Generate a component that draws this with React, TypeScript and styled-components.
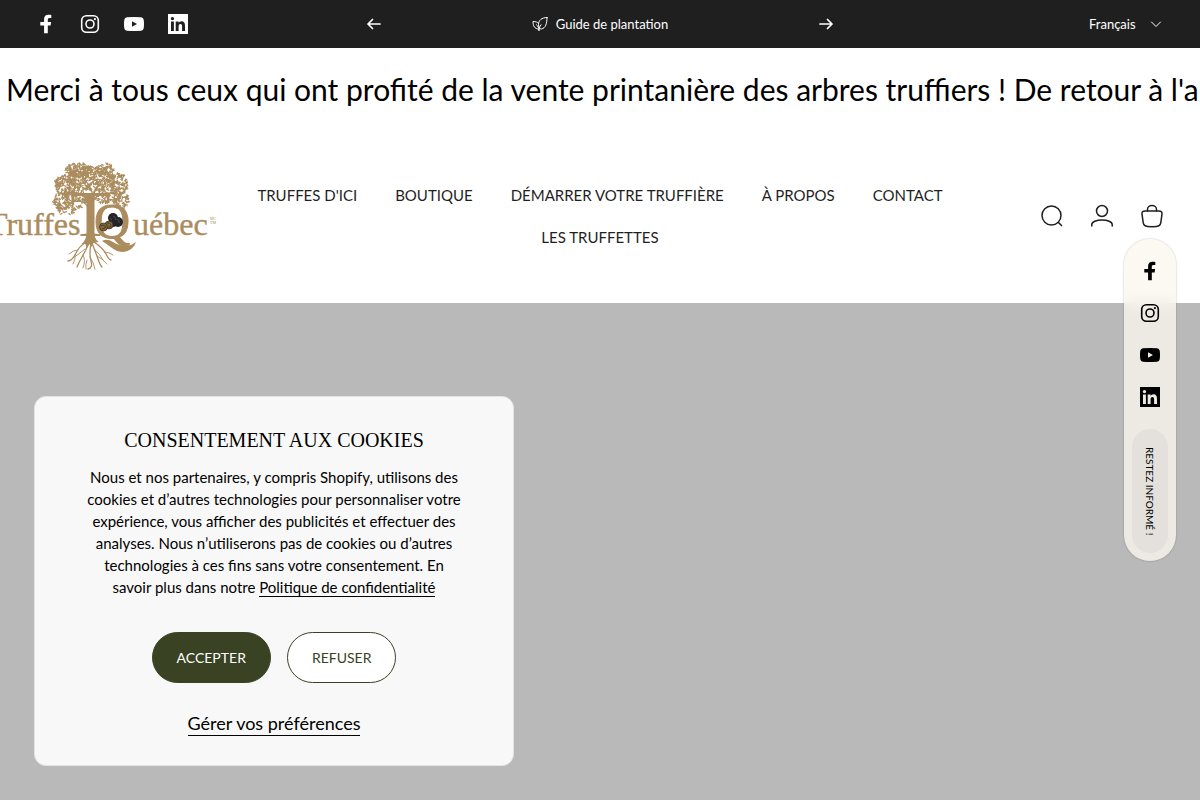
import React from 'react';
import styled, { createGlobalStyle } from 'styled-components';

const GlobalStyle = createGlobalStyle`
  *, *::before, *::after { box-sizing: border-box; }
  body {
    margin: 0;
    background: #fff;
    color: #000;
    font-family: Lato, 'Liberation Sans', sans-serif;
    font-size: 15px;
    line-height: 22px;
    overflow-x: hidden;
  }
  a { color: inherit; text-decoration: none; }
  button { font: inherit; cursor: pointer; }
  svg { display: block; }
`;

const Page = styled.div`
  display: flex;
  flex-direction: column;
  min-height: 100vh;
`;

const TopBar = styled.div`
  display: grid;
  grid-template-columns: 1fr 468px 1fr;
  align-items: center;
  height: 48px;
  padding: 0 36px;
  background: #1f1f1f;
  color: #fff;
  font-size: 13px;
`;

const SocialList = styled.ul<{ $vertical?: boolean }>`
  display: flex;
  flex-direction: ${(p) => (p.$vertical ? 'column' : 'row')};
  gap: ${(p) => (p.$vertical ? 22 : 24)}px;
  margin: 0;
  padding: 0;
  list-style: none;
`;

const Announcement = styled.div`
  display: flex;
  align-items: center;
  justify-content: space-between;
`;

const AnnouncementLink = styled.a`
  display: flex;
  align-items: center;
  gap: 8px;
`;

const IconButton = styled.button`
  display: flex;
  padding: 0;
  border: 0;
  background: none;
  color: inherit;
`;

const Language = styled.label`
  display: flex;
  align-items: center;
  justify-self: end;
  gap: 12px;
`;

const LanguageSelect = styled.select`
  appearance: none;
  padding: 0;
  border: 0;
  background: none;
  color: inherit;
  font: inherit;
  line-height: 20px;
`;

const Marquee = styled.div`
  padding: 20px 0 20px 6px;
  overflow: hidden;
  font-size: 30px;
  line-height: 42px;
  white-space: nowrap;
`;

const Header = styled.header`
  display: grid;
  grid-template-columns: minmax(0, 1fr) minmax(0, 686px) minmax(0, 1fr);
  align-items: center;
  gap: 40px;
  padding: 30px 36px 31px;
`;

const LogoLink = styled.a`
  display: flex;
  justify-content: flex-end;
  color: #ab8c5e;
`;

const LogoArt = styled.svg`
  flex: none;
  width: 228px;
  height: 112px;
  font-family: 'Liberation Serif', serif;
`;

const Nav = styled.nav`
  display: flex;
  flex-wrap: wrap;
  justify-content: center;
  gap: 20px 38px;
  color: #1f1f1f;
`;

const Actions = styled.div`
  display: flex;
  justify-content: flex-end;
  gap: 26px;
  color: #1f1f1f;
`;

const Hero = styled.main`
  flex: 1;
  background: #b9b9b9;
`;

const FloatingBar = styled.aside`
  position: fixed;
  top: 50%;
  right: 24px;
  transform: translateY(-50%);
  display: flex;
  flex-direction: column;
  align-items: center;
  gap: 22px;
  width: 52px;
  padding: 22px 8px 8px;
  border-radius: 26px;
  background: rgba(251, 247, 238, 0.78);
  backdrop-filter: blur(8px);
  box-shadow: 0 0 2px rgba(0, 0, 0, 0.3);
`;

const InformButton = styled.button`
  width: 36px;
  height: 124px;
  padding: 0;
  border: 0;
  border-radius: 18px;
  background: #e4e0dc;
  color: #000;
  font-size: 10px;
  line-height: 12px;
  text-transform: uppercase;
  writing-mode: vertical-rl;
`;

const Consent = styled.section`
  position: fixed;
  left: 34px;
  bottom: 34px;
  display: flex;
  flex-direction: column;
  align-items: center;
  width: 480px;
  max-width: calc(100vw - 68px);
  padding: 29px 48px;
  border: 1px solid #e4e4e4;
  border-radius: 12px;
  background: #f8f8f8;
  text-align: center;
`;

const ConsentTitle = styled.h2`
  margin: 0 0 12px;
  font-family: 'Liberation Serif', serif;
  font-size: 20px;
  font-weight: 400;
  line-height: 28px;
  text-transform: uppercase;
`;

const ConsentText = styled.p`
  margin: 0 0 34px;
`;

const PolicyLink = styled.a`
  border-bottom: 1px solid #000;
`;

const ConsentButtons = styled.div`
  display: flex;
  gap: 16px;
  margin-bottom: 28px;
`;

const PillButton = styled.button<{ $filled?: boolean }>`
  height: 51px;
  padding: 0 24px;
  border: 1px solid #394223;
  border-radius: 26px;
  background: ${(p) => (p.$filled ? '#394223' : '#fff')};
  color: ${(p) => (p.$filled ? '#fff' : '#394223')};
  font-size: 14px;
  text-transform: uppercase;
`;

const PreferencesButton = styled.button`
  padding: 0;
  border: 0;
  border-bottom: 1px solid #000;
  background: none;
  color: #000;
  font-size: 18px;
  line-height: 24px;
`;

const Facebook = () => (
  <svg width="20" height="20" viewBox="0 0 20 20" fill="currentColor" aria-hidden="true">
    <path d="M8.1 19.2v-7.8H4.3V8h3.8V5.2C8.1 2.2 9.7.8 12.4.8c1.2 0 2.1.1 2.9.2v3.1h-1.7c-1.5 0-1.8.8-1.8 1.9v2h3.3l-.5 3.4h-2.8v7.8z" />
  </svg>
);

const Instagram = () => (
  <svg width="20" height="20" viewBox="0 0 20 20" fill="none" stroke="currentColor" aria-hidden="true">
    <rect x="1.7" y="1.7" width="16.6" height="16.6" rx="4.8" strokeWidth="1.6" />
    <circle cx="10" cy="10" r="4" strokeWidth="1.6" />
    <circle cx="14.9" cy="5.1" r="1.1" fill="currentColor" stroke="none" />
  </svg>
);

const Youtube = () => (
  <svg width="20" height="20" viewBox="0 0 20 20" fill="currentColor" fillRule="evenodd" aria-hidden="true">
    <path d="M3 3.2Q10 2.6 17 3.2Q19.4 3.4 19.7 5.8Q20.3 10 19.7 14.2Q19.4 16.6 17 16.8Q10 17.4 3 16.8Q.6 16.6.3 14.2Q-.3 10 .3 5.8Q.6 3.4 3 3.2ZM8 7.2v5.6l5-2.8z" />
  </svg>
);

const Linkedin = () => (
  <svg width="20" height="20" viewBox="0 0 20 20" fill="currentColor" fillRule="evenodd" aria-hidden="true">
    <path d="M0 0h20v20H0zM3 7.6V17h2.9V7.6zM4.45 2.9a1.7 1.7 0 1 0 0 3.4a1.7 1.7 0 1 0 0-3.4zM7.7 7.6V17h2.9v-4.7c0-1.3.5-2.3 1.8-2.3s1.7 1 1.7 2.3V17H17v-5.3c0-2.8-1.1-4.4-3.4-4.4c-1.5 0-2.5.8-3 1.6V7.6z" />
  </svg>
);

const Arrow = ({ left }: { left?: boolean }) => (
  <svg width="16" height="16" viewBox="0 0 16 16" fill="none" stroke="currentColor" strokeWidth="1.7" strokeLinecap="round" strokeLinejoin="round" aria-hidden="true">
    {left ? <path d="M14 8H2M6.5 3.5 2 8l4.5 4.5" /> : <path d="M2 8h12M9.5 3.5 14 8l-4.5 4.5" />}
  </svg>
);

const Leaf = () => (
  <svg width="16" height="16" viewBox="0 0 16 16" fill="none" stroke="currentColor" strokeLinecap="round" strokeLinejoin="round" aria-hidden="true">
    <path d="M15 1.5C9.500 1.500 6.500 4.500 6.500 8.500c0 2.500 1 4.500 3 4.500C13.500 12 15 8 15 1.500z" />
    <path d="M6.500 7.500C5.500 6 3.500 5.500 1 5.500c0 4.500 1.700 7.500 5.500 7.500" />
    <path d="M4.500 8.800c1.500 1.200 2.500 3 2.500 6 0-2.500.6-4.300 2-6" />
  </svg>
);

const Chevron = () => (
  <svg width="16" height="16" viewBox="0 0 16 16" fill="none" stroke="currentColor" strokeLinecap="round" strokeLinejoin="round" aria-hidden="true">
    <path d="m3.500 6 4.500 4.500 4.500-4.500" />
  </svg>
);

const ActionIcon = ({ children }: { children: React.ReactNode }) => (
  <svg width="24" height="24" viewBox="0 0 24 24" fill="none" stroke="currentColor" strokeWidth="1.5" strokeLinecap="round" strokeLinejoin="round" aria-hidden="true">
    {children}
  </svg>
);

const socials = [
  { label: 'Facebook', Icon: Facebook },
  { label: 'Instagram', Icon: Instagram },
  { label: 'YouTube', Icon: Youtube },
  { label: 'LinkedIn', Icon: Linkedin },
];

const Socials = ({ vertical }: { vertical?: boolean }) => (
  <SocialList $vertical={vertical}>
    {socials.map(({ label, Icon }) => (
      <li key={label}>
        <a href="#" aria-label={label}>
          <Icon />
        </a>
      </li>
    ))}
  </SocialList>
);

/* Foliage clusters of the logo's tree: centre, radii and number of leaves. */
const clusters = [
  [92, 179, 24, 12, 330],
  [80, 170, 14, 7, 130],
  [106, 169, 9, 6, 60],
  [66, 185, 11, 10, 120],
  [119, 184, 10, 11, 120],
  [62, 201, 9, 9, 75],
  [122, 200, 8, 9, 65],
  [76, 198, 13, 11, 110],
  [108, 195, 14, 9, 90],
  [67, 210, 10, 5, 30],
];

const leaves = (() => {
  let seed = 11;
  const random = () => {
    seed = (seed * 16807) % 2147483647;
    return seed / 2147483647;
  };
  return clusters.flatMap(([cx, cy, rx, ry, count]) =>
    Array.from({ length: count }, () => {
      const angle = random() * Math.PI * 2;
      const reach = Math.sqrt(random());
      return {
        x: Math.round((cx + Math.cos(angle) * rx * reach) * 10) / 10,
        y: Math.round((cy + Math.sin(angle) * ry * reach) * 10) / 10,
        turn: Math.round(random() * 180),
      };
    }),
  );
})();

const Logo = () => (
  <LogoArt viewBox="-10 160 228 112" fill="currentColor" role="img" aria-label="Truffes Québec">
    {leaves.map((leaf, i) => (
      <ellipse key={i} rx="1.5" ry="0.7" transform={`translate(${leaf.x} ${leaf.y}) rotate(${leaf.turn})`} />
    ))}
    <g fill="none" stroke="currentColor" strokeWidth="1.2" strokeLinecap="round">
      <path d="M88 206Q84 198 70 203M88 200Q80 190 66 193M95 200Q101 190 116 194M94 196Q92 186 84 178M93 198Q98 184 106 178" />
    </g>
    <path d="M87.5 193h8v40q0 6 4 9l-5 1-2 4-2-3-3 4-1-4-4 0q5-4 5-11z" />
    <g fill="none" stroke="currentColor" strokeLinecap="round">
      <path strokeWidth="1.3" d="M88 242Q81 245 77 253T69 261M90 243Q86 252 83 257T78 267M92 243Q90 254 92 261T89 269M93 243Q97 253 99 259T103 267M95 242Q104 248 107 254T112 260" />
      <path strokeWidth="0.9" d="M79 250Q74 250 70 254M76 255Q77 259 74 264M84 255Q87 260 84 268M91 257Q95 263 96 269M98 256Q104 259 108 264M106 252Q110 252 114 255M86 249Q80 254 74 258M88 260Q86 265 87 269M95 249Q102 255 104 260" />
    </g>
    <text x="91.5" y="236" fontSize="66" textAnchor="middle">T</text>
    <text x="95" y="238" fontSize="50" stroke="currentColor" strokeWidth="1">Q</text>
    <path d="M103 241q5-3 11 1t14 4q5-1 9-4q-3 9-13 10q-6 0-11-4t-10-7z" />
    <g fill="#222426">
      <circle cx="114" cy="218" r="5" />
      <circle cx="119" cy="222" r="5" />
      <circle cx="114" cy="223" r="4" />
    </g>
    <g fill="#80683f" stroke="#33291b" strokeWidth="0.7">
      <circle cx="110" cy="225" r="4" />
      <circle cx="104.5" cy="227" r="4" />
      <path fill="none" d="M102 226q2-2 4 0t-3 3M108 223q3-1 4 2t-3 2" />
    </g>
    <path d="M114 216q3 1 3 4M118 219q3 1 2 4M111 218l2 2" fill="none" stroke="#6b6b6b" strokeWidth="0.6" />
    <g fontSize="32" stroke="currentColor" strokeWidth="0.4">
      <text x="-11" y="235">Truffes</text>
      <text x="134" y="235">uébec</text>
    </g>
    <g fontSize="4">
      <text x="211" y="220">MC</text>
      <text x="211" y="224">TM</text>
    </g>
  </LogoArt>
);

const navItems = ["Truffes d'ici", 'Boutique', 'Démarrer votre truffière', 'À propos', 'Contact', 'Les Truffettes'];

export default function App() {
  return (
    <Page>
      <GlobalStyle />
      <TopBar>
        <Socials />
        <Announcement>
          <IconButton aria-label="Précédent"><Arrow left /></IconButton>
          <AnnouncementLink href="#">
            <Leaf />
            Guide de plantation
          </AnnouncementLink>
          <IconButton aria-label="Suivant"><Arrow /></IconButton>
        </Announcement>
        <Language>
          <LanguageSelect aria-label="Langue" defaultValue="fr">
            <option value="fr">Français</option>
          </LanguageSelect>
          <Chevron />
        </Language>
      </TopBar>
      <Marquee>
        Merci à tous ceux qui ont profité de la vente printanière des arbres truffiers ! De retour à l'automne
      </Marquee>
      <Header>
        <LogoLink href="#"><Logo /></LogoLink>
        <Nav>
          {navItems.map((item) => (
            <a key={item} href="#">{item.toUpperCase()}</a>
          ))}
        </Nav>
        <Actions>
          <IconButton aria-label="Rechercher">
            <ActionIcon>
              <circle cx="11.5" cy="11.5" r="9.5" />
              <path d="m18.500 18.500 3 3" />
            </ActionIcon>
          </IconButton>
          <IconButton aria-label="Compte">
            <ActionIcon>
              <circle cx="12" cy="7" r="5.5" />
              <path d="M1.800 22v-1.500c0-2.700 4.700-4.500 10.200-4.500s10.200 1.800 10.200 4.500V22" />
            </ActionIcon>
          </IconButton>
          <IconButton aria-label="Panier">
            <ActionIcon>
              <path d="M5 7h14c2.200 0 3.300 1.200 3 3.200l-1.200 8.500c-.4 2.600-1.900 3.600-4.300 3.800q-4.500.3-9 0c-2.400-.2-3.900-1.200-4.300-3.800L2 10.200C1.700 8.200 2.800 7 5 7z" />
              <path d="M7.500 7V5.500a4.500 4 0 0 1 9 0V7" />
            </ActionIcon>
          </IconButton>
        </Actions>
      </Header>
      <Hero />
      <FloatingBar>
        <Socials vertical />
        <InformButton>Restez informé !</InformButton>
      </FloatingBar>
      <Consent aria-label="Consentement aux cookies">
        <ConsentTitle>Consentement aux cookies</ConsentTitle>
        <ConsentText>
          Nous et nos partenaires, y compris Shopify, utilisons des cookies et d’autres technologies pour
          personnaliser votre expérience, vous afficher des publicités et effectuer des analyses. Nous
          n’utiliserons pas de cookies ou d’autres technologies à ces fins sans votre consentement. En savoir
          plus dans notre <PolicyLink href="#">Politique de confidentialité</PolicyLink>
        </ConsentText>
        <ConsentButtons>
          <PillButton $filled>Accepter</PillButton>
          <PillButton>Refuser</PillButton>
        </ConsentButtons>
        <PreferencesButton>Gérer vos préférences</PreferencesButton>
      </Consent>
    </Page>
  );
}
